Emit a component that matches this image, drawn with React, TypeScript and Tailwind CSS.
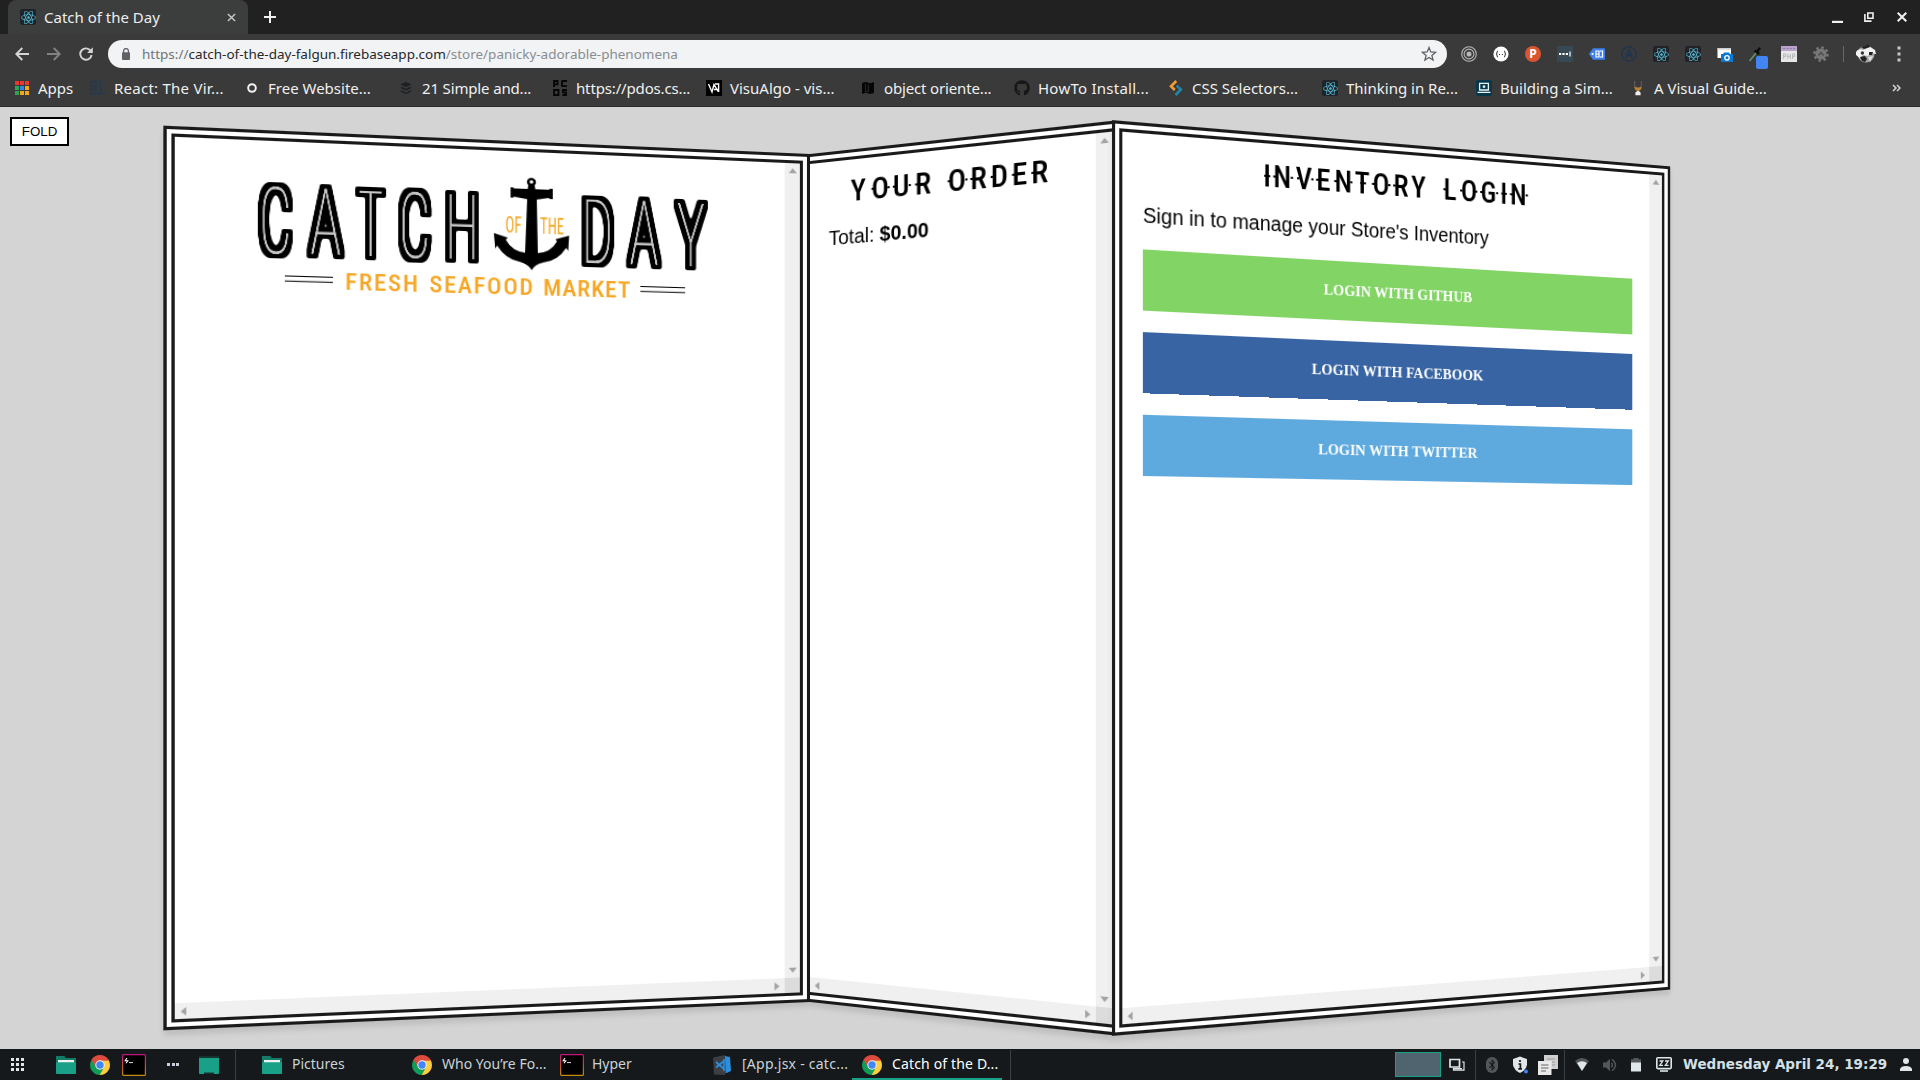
import React from "react";
import { FaReact, FaGithub, FaBuffer, FaBluetoothB } from "react-icons/fa";

/* ---------- small icons ---------- */

function ReactBadge() {
  return (
    <span className="flex size-4 shrink-0 items-center justify-center rounded-[2px] bg-[#20232a]">
      <FaReact size={15} color="#54bdd6" />
    </span>
  );
}

function ChromeIcon() {
  return (
    <svg viewBox="0 0 20 20" className="size-5 shrink-0">
      <path d="M10 10 L1.34 5 A10 10 0 0 1 18.66 5 Z" fill="#dd4b3e" />
      <path d="M10 10 L18.66 5 A10 10 0 0 1 10 20 Z" fill="#ffcd41" />
      <path d="M10 10 L10 20 A10 10 0 0 1 1.34 5 Z" fill="#109d58" />
      <path d="M10 5.4 H18.9 L14 12.3 Z" fill="#ffcd41" />
      <path d="M10 5.4 H18.85 L18.3 4.4 H10Z" fill="#dd4b3e" />
      <path d="M14 12.3 L9.7 20 L7.2 14 Z" fill="#109d58" />
      <path d="M1.6 4.6 L6 12.3 L7 7 Z" fill="#dd4b3e" />
      <circle cx="10" cy="10" r="4.7" fill="#f1f1f1" />
      <circle cx="10" cy="10" r="3.7" fill="#4285f4" />
    </svg>
  );
}

function HyperIcon() {
  return (
    <svg viewBox="0 0 24 22" className="h-[22px] w-6 shrink-0">
      <defs>
        <linearGradient id="hyperEdge" x1="0" y1="0" x2="0" y2="1">
          <stop offset="0" stopColor="#c2187e" />
          <stop offset="0.6" stopColor="#c4582b" />
          <stop offset="1" stopColor="#c78b12" />
        </linearGradient>
      </defs>
      <rect x="0.6" y="0.6" width="22.8" height="20.8" rx="1" fill="#000" stroke="url(#hyperEdge)" strokeWidth="1.2" />
      <path d="M5 4 L3.2 6.7 H5.8 L4 9.2" fill="none" stroke="#fff" strokeWidth="1.1" />
      <path d="M7 8.6 H11" stroke="#ddd" strokeWidth="1" />
    </svg>
  );
}

function FolderIcon() {
  return (
    <svg viewBox="0 0 20 18" className="h-[18px] w-5 shrink-0">
      <path d="M0 0 H8.5 L9.5 2 H20 V10 H0 Z" fill="#137c69" />
      <rect x="2" y="4" width="16" height="6" fill="#f0f0f0" />
      <rect x="0" y="6.2" width="20" height="11.8" rx="0.8" fill="#18a187" />
    </svg>
  );
}

/* ---------- browser chrome ---------- */

function TabStrip() {
  return (
    <div className="flex h-[34px] items-center bg-[#212121]">
      <div className="ml-2 flex h-full w-[240px] items-center rounded-t-lg bg-[#3c3d3d] pl-3">
        <ReactBadge />
        <span className="ml-2 w-[183px] whitespace-nowrap text-[15px] text-[#eee]">Catch of the Day</span>
        <svg viewBox="0 0 10 10" className="size-[9px] shrink-0">
          <path d="M1 1 L9 9 M9 1 L1 9" stroke="#c9c9c9" strokeWidth="1.6" />
        </svg>
      </div>
      <svg viewBox="0 0 12 12" className="ml-4 size-3">
        <path d="M6 0 V12 M0 6 H12" stroke="#f1f1f1" strokeWidth="2" />
      </svg>
      <div className="ml-auto flex items-center pr-[13px]">
        <svg viewBox="0 0 10 10" className="size-[11px]">
          <path d="M0 9 H10" stroke="#f1f1f1" strokeWidth="2" />
        </svg>
        <svg viewBox="0 0 10 10" className="ml-[21px] size-[10px]">
          <path d="M3.8 1 H9 V6.2 H3.8 Z" fill="none" stroke="#f1f1f1" strokeWidth="1.6" />
          <path d="M0.9 2 V9.1 H7.5" fill="none" stroke="#f1f1f1" strokeWidth="1.6" />
        </svg>
        <svg viewBox="0 0 10 10" className="ml-[23px] size-[10px]">
          <path d="M0.7 0.7 L9.3 9.3 M9.3 0.7 L0.7 9.3" stroke="#f1f1f1" strokeWidth="2" />
        </svg>
      </div>
    </div>
  );
}

function Extensions() {
  return (
    <div className="ml-[14px] flex items-center gap-4">
      <svg viewBox="0 0 16 16" className="size-4">
        <g fill="none" stroke="#b9b9b9" strokeWidth="1.1">
          <circle cx="8" cy="8" r="7.3" />
          <circle cx="8" cy="8" r="4.9" />
          <circle cx="8" cy="8" r="2" fill="#b9b9b9" />
        </g>
      </svg>
      <svg viewBox="0 0 16 16" className="size-4">
        <circle cx="8" cy="8" r="7.6" fill="#fff" />
        <path d="M5 5 Q3.5 5.4 4 7 Q4 8 3 8 Q4 8 4 9 Q3.5 10.7 5 11 M11 5 Q12.5 5.4 12 7 Q12 8 13 8 Q12 8 12 9 Q12.5 10.7 11 11" fill="none" stroke="#333" strokeWidth="1" />
        <path d="M6 8.5 H7 M9 8.5 H10" stroke="#333" />
      </svg>
      <span className="flex size-4 items-center justify-center rounded-full bg-[#da552f] text-[12px] font-bold leading-none text-white">P</span>
      <svg viewBox="0 0 16 16" className="size-4">
        <rect width="16" height="16" rx="1" fill="#374a54" />
        <path d="M2 8 H4.2 M5.4 8 H7.6 M8.8 8 H11" stroke="#fff" strokeWidth="2.2" />
        <path d="M13 5.5 V10.5" stroke="#fff" strokeWidth="1.2" />
      </svg>
      <svg viewBox="0 0 16 16" className="size-4">
        <path d="M4 2.2 H15 Q16 2.2 16 3.2 V12.8 Q16 13.8 15 13.8 H4 L0 8 Z" fill="#3f80f0" />
        <circle cx="3.6" cy="8" r="1.1" fill="#fff" />
        <path d="M7 5 H10 V11 H7 Z M11 5 H13.5 V11 H11" fill="none" stroke="#fff" strokeWidth="1.2" />
        <path d="M7 8 H10" stroke="#fff" />
      </svg>
      <svg viewBox="0 0 16 16" className="size-4">
        <circle cx="8" cy="8" r="7.2" fill="none" stroke="#1d3552" strokeWidth="1.3" />
        <path d="M4.8 12 L8 4 L11.2 12 M6.3 9.4 H10" fill="none" stroke="#1d3552" strokeWidth="1.6" />
      </svg>
      <ReactBadge />
      <ReactBadge />
      <svg viewBox="0 0 16 16" className="size-4">
        <rect x="0.5" y="2" width="13.5" height="10" fill="#fff" />
        <rect x="0.5" y="2" width="13.5" height="1.6" fill="#cfcfcf" />
        <path d="M4 8 H6 L7 6.5 H12 L13 8 H16 V16 H4 Z" fill="#0a79d1" />
        <circle cx="10" cy="11.8" r="2.2" fill="none" stroke="#fff" strokeWidth="1.3" />
      </svg>
      <svg viewBox="0 0 20 22" className="-ml-px -mr-[3px] mt-[8px] h-[22px] w-5">
        <path d="M1.5 14 L8 6" stroke="#5d9a62" strokeWidth="1.6" />
        <path d="M6.6 3.4 L11 7 M8.2 6 L12 0.8" stroke="#0d0d0d" strokeWidth="2.4" />
        <rect x="8" y="9" width="12" height="13" rx="2" fill="#4285f4" />
      </svg>
      <svg viewBox="0 0 16 16" className="size-4">
        <rect width="16" height="16" fill="#e9e6ea" />
        <rect width="16" height="5" fill="#b9a3cb" />
        <path d="M2 2.5 H14" stroke="#8e7aa3" strokeDasharray="2 1.4" />
        <path d="M2.6 13 V8 H4.6 V10.4 H2.8 M6.8 13 V8 M9.4 13 V8 M6.8 10.4 H9.4 M11.6 13 V8 H13.6 V10.4 H11.8" fill="none" stroke="#bdbdbd" strokeWidth="1.1" />
      </svg>
      <svg viewBox="0 0 16 16" className="size-4">
        <circle cx="8" cy="8" r="6.6" fill="none" stroke="#777" strokeWidth="2.4" strokeDasharray="2.6 2.58" />
        <circle cx="8" cy="8" r="5.6" fill="#777" />
        <path d="M5.5 9.5 L8 6.5 L10.5 9.5" stroke="#4a4a4a" strokeWidth="1.2" fill="none" />
      </svg>
    </div>
  );
}

function Toolbar() {
  return (
    <div className="flex h-10 items-center bg-[#3a3a3a]">
      <svg viewBox="0 0 14 14" className="ml-[15px] size-[14px]">
        <path d="M14 7 H1.5 M7.3 1 L1.3 7 L7.3 13" fill="none" stroke="#d5d5d5" strokeWidth="1.9" />
      </svg>
      <svg viewBox="0 0 14 14" className="ml-[18px] size-[14px]">
        <path d="M0 7 H12.5 M6.7 1 L12.7 7 L6.7 13" fill="none" stroke="#828282" strokeWidth="1.9" />
      </svg>
      <svg viewBox="0 0 14 14" className="ml-[18px] size-[14px]">
        <path d="M11.8 4 A5.7 5.7 0 1 0 12.6 8" fill="none" stroke="#d5d5d5" strokeWidth="1.9" />
        <path d="M13.8 0.3 V6 H8.1 Z" fill="#d5d5d5" />
      </svg>
      <div className="ml-[15px] flex h-7 w-[1339px] items-center rounded-full bg-[#f1f3f4] pl-[14px] pr-[10px] text-[13.48px] text-[#8a8d91]">
        <svg viewBox="0 0 8 12" className="h-3 w-2">
          <path d="M1.6 5 V3 A2.4 2.4 0 0 1 6.4 3 V5" fill="none" stroke="#5f6368" strokeWidth="1.3" />
          <rect y="4.2" width="8" height="7.8" rx="0.8" fill="#5f6368" />
        </svg>
        <span className="ml-3 whitespace-nowrap">
          <span className="text-[#6f7377]">https://</span>
          <span className="text-[#25282c]">catch-of-the-day-falgun.firebaseapp.com</span>/store/panicky-adorable-phenomena
        </span>
        <svg viewBox="0 0 16 16" className="ml-auto size-4">
          <path d="M8 1.5 L9.8 6 L14.6 6.3 L10.9 9.4 L12.1 14.1 L8 11.5 L3.9 14.1 L5.1 9.4 L1.4 6.3 L6.2 6 Z" fill="none" stroke="#5f6368" strokeWidth="1.3" />
        </svg>
      </div>
      <Extensions />
      <div className="ml-[14px] h-4 w-px bg-[#686868]" />
      <svg viewBox="0 0 20 20" className="ml-3 size-5">
        <circle cx="10" cy="10" r="8.6" fill="#a5a5a5" />
        <path d="M0 8 Q2 4 7 6 L14 3 L19 6 L20 10 L14 9 L12 12 L7 11 L4 14 L0 11 Z" fill="#f2f2f2" />
        <path d="M5 3 L12 0.5 L14 3 L8 5 Z M4 13 L9 12 L11 15 L9 18 L6 17 Z M13 8 H17 L16 11 H13 Z" fill="#222" />
        <circle cx="6.4" cy="9" r="1.7" fill="#333" />
        <path d="M12 13 L17 12 L14 18 Z" fill="#e0e0e0" />
      </svg>
      <svg viewBox="0 0 4 16" className="ml-[21px] h-4 w-1">
        <g fill="#c9c9c9">
          <rect x="0.5" y="0.5" width="3" height="3" />
          <rect x="0.5" y="6.5" width="3" height="3" />
          <rect x="0.5" y="12.5" width="3" height="3" />
        </g>
      </svg>
    </div>
  );
}

const bookmarks: { label: string; icon: React.ReactNode; tracking?: string }[] = [
  {
    label: "React: The Vir...",
    tracking: "tracking-[0.25px]",
    icon: (
      <svg viewBox="0 0 16 16" className="size-4">
        <path d="M1 1.5 H10.5 V13.5 H1 Z M4 5 H7.5 M4 5 V10 H7.5 M7.5 7.5 H5 M12 13.5 H16" fill="none" stroke="#22394d" strokeWidth="1.3" />
      </svg>
    ),
  },
  {
    label: "Free Website...",
    icon: (
      <svg viewBox="0 0 16 16" className="size-4">
        <circle cx="8" cy="8" r="3.8" fill="none" stroke="#f1f1f1" strokeWidth="2" />
      </svg>
    ),
  },
  { label: "21 Simple and...", icon: <FaBuffer size={14} color="#1c2226" />, tracking: "tracking-[-0.15px]" },
  {
    label: "https://pdos.cs...",
    tracking: "tracking-[-0.15px]",
    icon: (
      <svg viewBox="0 0 16 16" className="size-4">
        <g fill="none" stroke="#050505" strokeWidth="1.8">
          <path d="M2 7 V1 H5.5 V4.3 H2 M10 0.6 V6.6 M10 1 H15 M10 6.2 H15" />
          <path d="M2 10 H6.5 V15 H2 Z M15 10 H11 V12.4 H14 V15 H10.5" />
        </g>
      </svg>
    ),
  },
  {
    label: "VisuAlgo - vis...",
    icon: (
      <svg viewBox="0 0 16 16" className="size-4">
        <rect width="16" height="16" fill="#000" />
        <path d="M2.5 4 L6 12 L8 4.5 L12.5 12 M9 4 H12.6 V12 M8 9.5 H12" fill="none" stroke="#fff" strokeWidth="1.4" />
      </svg>
    ),
  },
  {
    label: "object oriente...",
    tracking: "tracking-[-0.15px]",
    icon: (
      <svg viewBox="0 0 16 16" className="size-4">
        <path d="M2 3 L6 2 L10 3.2 L14 2 V13 L10 14 L6 12.8 L2 14 Z" fill="#050505" />
        <path d="M5.6 4 V11.6 H8.4 V4.6" fill="none" stroke="#2c2c2c" strokeWidth="1" />
      </svg>
    ),
  },
  { label: "HowTo Install...", icon: <FaGithub size={16} color="#181717" />, tracking: "tracking-[0.25px]" },
  {
    label: "CSS Selectors...",
    icon: (
      <svg viewBox="0 0 16 16" className="size-4">
        <path d="M8.3 1 L3 6.2 L6.8 10" fill="none" stroke="#f79a33" strokeWidth="2.6" />
        <path d="M8.6 5.6 L12.8 9.6 L7.6 15" fill="none" stroke="#1f88a8" strokeWidth="2.6" />
      </svg>
    ),
  },
  { label: "Thinking in Re...", icon: <ReactBadge /> },
  {
    label: "Building a Sim...",
    icon: (
      <svg viewBox="0 0 16 16" className="size-4">
        <rect width="16" height="16" rx="2" fill="#06384a" />
        <path d="M3.6 3.4 H12.4 V10 H3.6 Z M1.5 12.3 H14.5" fill="none" stroke="#e9f2f4" strokeWidth="1.3" />
        <rect x="6.8" y="5.4" width="2.4" height="2.4" fill="#e9f2f4" />
      </svg>
    ),
  },
  {
    label: "A Visual Guide...",
    icon: (
      <svg viewBox="0 0 16 16" className="size-4">
        <path d="M4.5 1 L5 7 M11.5 1 L11 7" stroke="#6b6b6b" strokeWidth="0.8" />
        <path d="M4.3 6.5 Q8 8.6 11.7 6.5 Q11.4 10.8 8 11 Q4.6 10.8 4.3 6.5" fill="#b58432" />
        <path d="M7.2 11 H8.8 L10.6 12.4 V15.2 H5.4 V12.4 Z" fill="#eee" />
      </svg>
    ),
  },
];

const appsColors = ["#e8382f", "#e8382f", "#e8382f", "#2fa457", "#2f86e8", "#f3a61a", "#2fa457", "#f3a61a", "#f3a61a"];

function BookmarkBar() {
  return (
    <div className="flex h-[33px] items-center border-b border-[#2a2a2a] bg-[#3a3a3a] pb-[4px] pl-[15px] text-[15px] text-[#f0f0f0]">
      <div className="grid w-[14px] grid-cols-3 gap-[1.5px]">
        {appsColors.map((c, i) => (
          <span key={i} className="h-[3.7px]" style={{ backgroundColor: c }} />
        ))}
      </div>
      <span className="ml-[9px] w-[52px]">Apps</span>
      {bookmarks.map((b) => (
        <div key={b.label} className="flex w-[154px] items-center gap-2">
          <span className="flex size-4 shrink-0 items-center justify-center">{b.icon}</span>
          <span className={`whitespace-nowrap ${b.tracking ?? ""}`}>{b.label}</span>
        </div>
      ))}
      <svg viewBox="0 0 9 8" className="ml-auto mr-[19px] h-2 w-[9px]">
        <path d="M1 1 L4 4 L1 7 M5 1 L8 4 L5 7" fill="none" stroke="#d5d5d5" strokeWidth="1.5" />
      </svg>
    </div>
  );
}

/* ---------- menu panels ---------- */

function ScrollFrame({ children }: { children: React.ReactNode }) {
  return (
    <div className="grid h-full grid-cols-[1fr_15px] grid-rows-[1fr_15px]">
      <div className="min-w-0 overflow-hidden px-5">{children}</div>
      <div className="flex flex-col items-center justify-between bg-[#f0f0f0] py-[5px]">
        <svg viewBox="0 0 8 5" className="h-[5px] w-2"><path d="M0 5 L4 0 L8 5 Z" fill="#a3a3a3" /></svg>
        <svg viewBox="0 0 8 5" className="h-[5px] w-2"><path d="M0 0 L4 5 L8 0 Z" fill="#a3a3a3" /></svg>
      </div>
      <div className="flex items-center justify-between bg-[#f0f0f0] px-[5px]">
        <svg viewBox="0 0 5 8" className="h-2 w-[5px]"><path d="M5 0 L0 4 L5 8 Z" fill="#a3a3a3" /></svg>
        <svg viewBox="0 0 5 8" className="h-2 w-[5px]"><path d="M0 0 L5 4 L0 8 Z" fill="#a3a3a3" /></svg>
      </div>
      <div className="bg-[#dcdcdc]" />
    </div>
  );
}

const catchLetters = [
  ["C", 84, 29],
  ["A", 129.5, 28],
  ["T", 173, 22],
  ["C", 209.5, 29],
  ["H", 252, 31],
] as const;
const dayLetters = [
  ["D", 379, 30],
  ["A", 424.5, 28],
  ["Y", 470, 27],
] as const;

function Logo() {
  return (
    <svg viewBox="30 10 525 150" className="h-[150px] w-[525px]">
      <defs>
        <filter id="inline" x="-10%" y="-20%" width="120%" height="140%" colorInterpolationFilters="sRGB">
          <feComponentTransfer in="SourceAlpha">
            <feFuncA type="linear" slope="4" intercept="0" />
          </feComponentTransfer>
          <feMorphology operator="dilate" radius="3.6" />
          <feGaussianBlur stdDeviation="1.1" />
          <feComponentTransfer result="fat">
            <feFuncA type="linear" slope="3" intercept="-1" />
          </feComponentTransfer>
          <feComponentTransfer in="SourceGraphic" result="line">
            <feFuncA type="linear" slope="1.8" intercept="0" />
          </feComponentTransfer>
          <feMerge>
            <feMergeNode in="fat" />
            <feMergeNode in="line" />
          </feMerge>
        </filter>
      </defs>
      <g
        className="[font-stretch:condensed]"
        fontFamily="Roboto"
        fontWeight="100"
        fontSize="87"
        fill="#c4c4c4"
        filter="url(#inline)"
      >
        <text y="115.7">
          {catchLetters.map(([ch, x, w], i) => (
            <tspan key={i} x={x} textLength={w} lengthAdjust="spacingAndGlyphs">{ch}</tspan>
          ))}
        </text>
        <text y="115.7">
          {dayLetters.map(([ch, x, w], i) => (
            <tspan key={i} x={x} textLength={w} lengthAdjust="spacingAndGlyphs">{ch}</tspan>
          ))}
        </text>
      </g>
      <g className="[font-stretch:condensed]" fontFamily="Roboto" fontSize="21.5" fill="#f5a623">
        <text x="307.5" y="89.2" textLength="15.5" lengthAdjust="spacingAndGlyphs">OF</text>
        <text x="340" y="89.2" textLength="22.5" lengthAdjust="spacingAndGlyphs">THE</text>
      </g>
      <path
        d="M332 35 a4.2 4.2 0 0 1 3 7.2 L335.6 46 H348 L349.5 45 H352 V55 H349.5 L348 54 L337 56 L338 108 Q350 107 356 96 L354.5 94 L367.4 90 L366.5 105 L364.5 102 Q357 115 343 117 Q335 119 332.3 124.8 Q329 119 321 117 Q308 115 300 102 L298.3 105 L297 90 L310 94 L308 96 Q314 107 326 108 L328 56 L316 54 L314.5 55 H312.5 V45 H314.5 L316 46 H328.5 L329 42.2 a4.2 4.2 0 0 1 3 -7.2 Z"
        fill="#000"
      />
      <circle cx="332" cy="39" r="1.7" fill="#fff" />
      <g className="[font-stretch:82%]" fontFamily="Roboto" fontWeight="500" fontSize="22.5" fill="#f5a623">
        <text x="161" y="149.2" textLength="66">FRESH</text>
        <text x="237.5" y="149.2" textLength="96">SEAFOOD</text>
        <text x="343" y="149.2" textLength="82.5">MARKET</text>
      </g>
      <path d="M107 137.5 H150 M107 142.3 H150 M435 137.5 H478 M435 142.3 H478" stroke="#000" strokeWidth="1" />
    </svg>
  );
}

type Word = { text: string; xs: string };

/* Display heading: condensed capitals with short spurs at mid height. */
function Title({ words, spurs, className }: { words: Word[]; spurs: string; className: string }) {
  return (
    <svg className={className}>
      <g className="[font-stretch:82%]" fontFamily="Roboto" fontWeight="500" fontSize="30" fill="#000">
        {words.map((w) => (
          <text key={w.text} x={w.xs} y="41.5">
            {w.text}
          </text>
        ))}
      </g>
      <path d={spurs} stroke="#000" strokeWidth="1.8" />
    </svg>
  );
}

const panelBase =
  "border-[#1a1a1a] [border-style:double] bg-white shadow-[0_5px_5px_rgba(0,0,0,0.1)] font-['Liberation_Sans',Arial,sans-serif] text-[20px] text-black";

function LoginButton({ className, children }: { className: string; children: React.ReactNode }) {
  return <button className={`h-[57px] pb-px uppercase leading-[18px] ${className}`}>{children}</button>;
}

function Storefront() {
  return (
    <div className="flex h-[942px] flex-col bg-[#d4d4d4]">
      <div className="h-[47px] pl-[10px] pt-[10px]">
        <button className="flex h-[29px] w-[59px] items-center justify-center border-2 border-black bg-white font-['Liberation_Sans',Arial,sans-serif] text-[13.3px] text-black">
          FOLD
        </button>
      </div>
      <div className="mx-auto flex h-[848px] w-[1500px] perspective-[1000px]">
        <section className={`w-[600px] border-[10px] [transform:translateX(50%)_rotateY(6deg)_translateX(-50%)] ${panelBase}`}>
          <ScrollFrame>
            <Logo />
          </ScrollFrame>
        </section>
        <section className={`w-[300px] border-y-[10px] [transform:translateX(-50%)_rotateY(-14deg)_translateX(50%)] ${panelBase}`}>
          <ScrollFrame>
            <Title
              className="h-[64px] w-[245px]"
              words={[
                { text: "YOUR", xs: "23 44.8 66.8 89.5" },
                { text: "ORDER", xs: "122.4 144.8 164.8 185.5 204.1" },
              ]}
              spurs="M44.8 31 H47 M61.2 31 H63.6 M66.8 31 H69 M83 31 H85.2 M89.6 31 H92 M122.4 31 H124.6 M139.8 31 H142 M144.8 31 H147 M164.8 31 H167 M185.6 31 H188 M204.2 31 H206.4"
            />
            <div className="leading-[25px]">
              Total: <strong>$0.00</strong>
            </div>
          </ScrollFrame>
        </section>
        <section className={`w-[600px] border-[10px] will-change-transform [transform:translateX(calc(-50%+2px))_rotateY(10deg)_scale(1.08)_translateX(50%)] ${panelBase}`}>
          <ScrollFrame>
            <Title
              className="h-[64px] w-full"
              words={[
                { text: "INVENTORY", xs: "120.2 130.6 153.5 175 194 215.2 234.2 256.4 275.5" },
                { text: "LOGIN", xs: "310.8 329.7 351.6 373.5 384.6" },
              ]}
              spurs="M121.2 31 H127.4 M130.5 31 H133 M148.5 31 H150.8 M155 31 H157.4 M169.8 31 H172 M174.8 31 H177.3 M193.8 31 H196.3 M210.5 31 H212.8 M221.2 31 H227.2 M233.6 31 H236 M251 31 H253.4 M256.2 31 H258.7 M310.6 31 H313.2 M329 31 H331.6 M345.6 31 H348 M351.2 31 H353.7 M369 31 H371.2 M374.6 31 H380.8 M384.4 31 H387 M402 31 H404.6"
            />
            <p className="leading-[25px]">Sign in to manage your Store's Inventory</p>
            <div className="mt-[19px] flex flex-col gap-5 font-['Liberation_Serif',serif] text-[15px] font-bold text-white">
              <LoginButton className="bg-[#82d465]">Login with GitHub</LoginButton>
              <LoginButton className="bg-[#3864a3]">Login with Facebook</LoginButton>
              <LoginButton className="bg-[#5ea9dd]">Login with Twitter</LoginButton>
            </div>
          </ScrollFrame>
        </section>
      </div>
    </div>
  );
}

/* ---------- desktop taskbar ---------- */

function Taskbar() {
  return (
    <div className="flex h-[31px] items-center bg-[#15191c] text-[14px] text-[#c9d3d8]">
      <div className="ml-[11px] grid w-[13px] grid-cols-3 gap-[2px]">
        {Array.from({ length: 9 }, (_, i) => (
          <span key={i} className="h-[3px] bg-[#e3e6e8]" />
        ))}
      </div>
      <div className="ml-8"><FolderIcon /></div>
      <div className="ml-[14px]"><ChromeIcon /></div>
      <div className="ml-3"><HyperIcon /></div>
      <div className="ml-[21px] flex w-3 justify-between">
        <span className="size-[3px] bg-[#ccd]" />
        <span className="size-[3px] bg-[#ccd]" />
        <span className="size-[3px] bg-[#ccd]" />
      </div>
      <svg viewBox="0 0 20 18" className="ml-5 h-[18px] w-5">
        <rect width="20" height="18" rx="0.8" fill="#18a187" />
        <rect width="20" height="2" fill="#16342f" />
        <path d="M5 18 V16.5 H15 V18 Z" fill="#15322e" />
      </svg>
      <div className="ml-4 h-[30px] w-px bg-[#3a3f42]" />
      <div className="ml-[26px]"><FolderIcon /></div>
      <span className="ml-[10px] w-[120px] pb-[2px]">Pictures</span>
      <ChromeIcon />
      <span className="ml-[10px] w-[118px] whitespace-nowrap pb-[2px] tracking-[0.02px]">Who You’re Fo...</span>
      <HyperIcon />
      <span className="ml-2 w-[121px] pb-[2px]">Hyper</span>
      <svg viewBox="0 0 18 20" className="h-5 w-[18px]">
        <path d="M0 2.5 L12 0 V20 L1 19.5 Z" fill="#3b3f44" />
        <path d="M12 1 L17 2 L18 16 L12.5 18.5 Z" fill="#2b8fdc" />
        <path d="M3 7 L11 14 M3 12.5 L11 6" stroke="#2b8fdc" strokeWidth="1.8" />
        <path d="M11 4 V16" stroke="#2b8fdc" strokeWidth="1.6" />
      </svg>
      <span className="ml-[11px] w-[110px] whitespace-nowrap pb-[2px] tracking-[0.25px]">[App.jsx - catc...</span>
      <div className="flex h-full w-[150px] items-center border-b-2 border-[#18a187] pl-[10px] pt-[2px] text-white">
        <ChromeIcon />
        <span className="ml-[10px] whitespace-nowrap pb-[2px] tracking-[0.15px]">Catch of the D...</span>
      </div>
      <div className="ml-2 h-[30px] w-px bg-[#3a3f42]" />

      <div className="ml-auto flex h-full items-center pr-2">
        <div className="h-[25px] w-[46px] border border-[#18a187] bg-[#50646f]" />
        <svg viewBox="0 0 16 14" className="ml-2 h-[14px] w-4">
          <path d="M1 1.5 H10.5 V9 H1 Z" fill="none" stroke="#e0e5e8" strokeWidth="1.7" />
          <path d="M13 4 H15 V12.2 H4.5 V10.7 H13" fill="none" stroke="#e0e5e8" strokeWidth="1.2" />
        </svg>
        <div className="ml-[10px] h-[30px] w-px bg-[#3a3f42]" />
        <span className="ml-[10px] flex h-4 w-3 items-center justify-center rounded-full bg-[#52575a]">
          <FaBluetoothB size={12} color="#15191c" />
        </span>
        <svg viewBox="0 0 16 18" className="ml-[14px] h-[18px] w-4">
          <path d="M8 0.5 L15 3 V9 Q14 14 8 17 Q2 14 1 9 V3 Z" fill="#e0e5e8" />
          <path d="M8 4 V6 M6.5 8 H8.4 V12.6 M6.3 12.8 H10" stroke="#15191c" strokeWidth="1.7" fill="none" />
          <circle cx="14" cy="15.6" r="2" fill="#3f80f0" />
        </svg>
        <svg viewBox="0 0 20 20" className="ml-[10px] size-5">
          <rect x="6" y="0" width="14" height="14" fill="#cfcfcf" />
          <path d="M9 4 H17 M14 7 H17 M14 10 H17" stroke="#999" />
          <rect x="0" y="6" width="13.5" height="14" fill="#e9e9e9" />
          <path d="M3 10 H10.5 M3 13 H10.5 M3 16 H8" stroke="#666" />
        </svg>
        <div className="ml-[6px] h-[30px] w-px bg-[#3a3f42]" />
        <svg viewBox="0 0 14 13" className="ml-[10px] h-[13px] w-[14px]">
          <path d="M0 3 Q7 -3 14 3 L7 13 Z" fill="#52575a" />
          <path d="M2 5 Q7 1.6 12 5 L7 13 Z" fill="#dfe7ea" />
        </svg>
        <svg viewBox="0 0 14 14" className="ml-[14px] size-[14px]">
          <path d="M0 4.5 H3 L7 0.8 V13.2 L3 9.5 H0 Z" fill="#52575a" />
          <path d="M8.5 4.6 Q10.3 7 8.5 9.4 M9 1.2 Q16 7 9 12.8" fill="none" stroke="#52575a" strokeWidth="1.4" />
        </svg>
        <svg viewBox="0 0 10 14" className="ml-[14px] h-[14px] w-[10px]">
          <path d="M2.5 0 H7.5 V1.2 H10 V5 H0 V1.2 H2.5 Z" fill="#52575a" />
          <rect y="4.5" width="10" height="9" fill="#dfe7ea" />
        </svg>
        <svg viewBox="0 0 16 15" className="ml-[15px] h-[15px] w-4">
          <rect x="0.8" y="0.8" width="14.4" height="10.8" rx="1" fill="none" stroke="#dfe7ea" strokeWidth="1.6" />
          <path d="M3.5 4 H6.8 L3.8 8.4 H7 M9 4 H12.3 L9.3 8.4 H12.6" fill="none" stroke="#dfe7ea" strokeWidth="1.3" />
          <path d="M4 14 H12" stroke="#dfe7ea" strokeWidth="1.6" />
        </svg>
        <span className="ml-[11px] w-[204px] whitespace-nowrap font-['DejaVu_Sans',sans-serif] text-[13.5px] font-bold text-[#d3e0e6]">
          Wednesday April 24, 19:29
        </span>
        <svg viewBox="0 0 12 13" className="ml-[13px] h-[13px] w-3">
          <circle cx="6" cy="3" r="3" fill="#e0e5e8" />
          <path d="M0 13 V11 Q1 8 6 8 Q11 8 12 11 V13 Z" fill="#e0e5e8" />
        </svg>
      </div>
    </div>
  );
}

export default function App() {
  return (
    <div className="flex h-[1080px] w-[1920px] flex-col overflow-hidden font-['Noto_Sans',sans-serif]">
      <TabStrip />
      <Toolbar />
      <BookmarkBar />
      <Storefront />
      <Taskbar />
    </div>
  );
}
